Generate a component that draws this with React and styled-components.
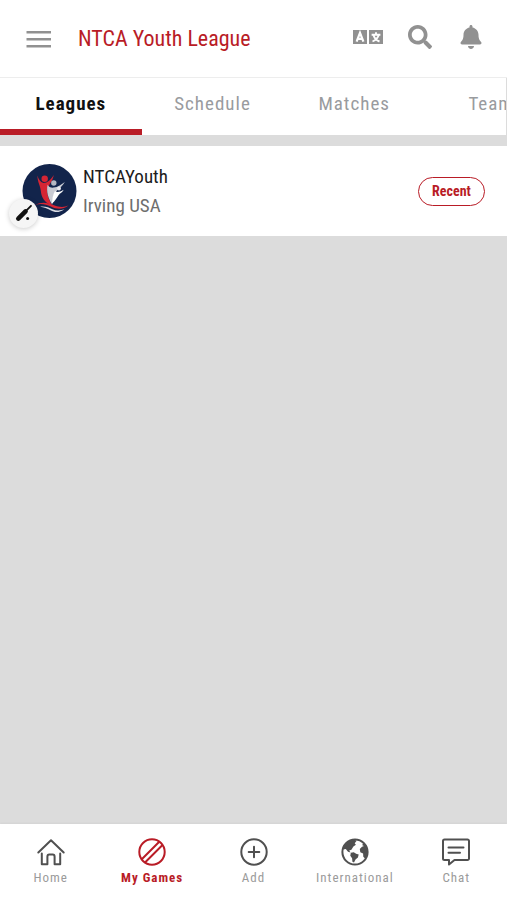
import React, { useState } from "react";
import styled, { createGlobalStyle } from "styled-components";
import { FaSearch, FaBell } from "react-icons/fa";

const red = "#b91c26";
const grey = "#919191";

const GlobalStyle = createGlobalStyle`
  * { box-sizing: border-box; }
  body {
    margin: 0;
    background: #dcdcdc;
    font-family: "Roboto Condensed", Roboto, sans-serif;
  }
  button { font-family: inherit; cursor: pointer; }
`;

const Page = styled.div`
  display: flex;
  flex-direction: column;
  min-height: 100vh;
  overflow-x: hidden;
`;

const Header = styled.header`
  display: flex;
  align-items: center;
  height: 78px;
  padding: 0 22px 0 24px;
  background: #fff;
  border-bottom: 1px solid #ededed;
`;

const IconButton = styled.button`
  display: flex;
  justify-content: center;
  min-width: 28px;
  padding: 0;
  border: 0;
  background: none;
  color: ${grey};
`;

const Title = styled.h1`
  flex: 1;
  margin: 0 0 0 24px;
  font-size: 22px;
  line-height: 28px;
  font-weight: 400;
  color: ${red};
  white-space: nowrap;
`;

const Actions = styled.div`
  display: flex;
  align-items: center;
  gap: 23px;
  padding-bottom: 3px;
`;

const Tabs = styled.nav`
  display: flex;
  height: 57px;
  background: #fff;
  overflow: hidden;
  border-right: 1px solid #dcdcdc;
`;

const Tab = styled.button`
  flex: 0 0 28%;
  padding: 0;
  border: 0;
  border-bottom: 6px solid ${(p) => (p.$active ? red : "transparent")};
  background: none;
  font-size: 19px;
  letter-spacing: 1px;
  font-weight: ${(p) => (p.$active ? 700 : 400)};
  color: ${(p) => (p.$active ? "#111" : "#999b9e")};
`;

const List = styled.main`
  flex: 1;
  padding-top: 11px;
`;

const LeagueRow = styled.article`
  display: flex;
  align-items: center;
  height: 90px;
  padding: 0 22px;
  background: #fff;
`;

const Avatar = styled.div`
  position: relative;
  display: flex;
  margin-right: 6px;
`;

const SportBadge = styled.span`
  position: absolute;
  left: -13px;
  bottom: -9px;
  display: flex;
  align-items: center;
  justify-content: center;
  width: 29px;
  height: 29px;
  border-radius: 50%;
  background: #f5f5f5;
  box-shadow: 0 1px 5px rgba(0, 0, 0, 0.2);
`;

const LeagueText = styled.div`
  flex: 1;
`;

const LeagueName = styled.h2`
  margin: 0;
  font-size: 19px;
  line-height: 29px;
  font-weight: 400;
  color: #1c1c1c;
`;

const LeaguePlace = styled.p`
  margin: 0;
  font-size: 19px;
  line-height: 29px;
  color: #6e6e6e;
`;

const Pill = styled.button`
  width: 67px;
  height: 29px;
  padding: 0;
  border: 1px solid ${red};
  border-radius: 15px;
  background: #fff;
  font-size: 14px;
  font-weight: 700;
  color: ${red};
`;

const BottomNav = styled.nav`
  display: flex;
  height: 76px;
  padding-top: 13px;
  background: #fff;
  box-shadow: 0 -1px 2px rgba(0, 0, 0, 0.04);
`;

const NavItem = styled.button`
  flex: 1 1 0;
  min-width: 0;
  display: flex;
  flex-direction: column;
  align-items: center;
  gap: 1px;
  padding: 0;
  border: 0;
  background: none;
  color: ${(p) => (p.$active ? red : "#505050")};
`;

const NavLabel = styled.span`
  font-size: 13px;
  line-height: 20px;
  letter-spacing: 1px;
  white-space: nowrap;
  font-weight: ${(p) => (p.$active ? 700 : 400)};
  color: ${(p) => (p.$active ? red : "#9b9b9b")};
`;

const MenuIcon = () => (
  <svg width="30" height="20" viewBox="0 0 30 20" stroke="currentColor" strokeWidth="2.6" aria-hidden="true">
    <path d="M2.5 3.2H27M2.5 10.2H27M2.5 17.2H27" />
  </svg>
);

const TranslateIcon = () => (
  <svg width="30" height="16" viewBox="0 0 30 16" aria-hidden="true">
    <path d="M0 1h14v14H0zM16 1h14v14H16z" fill="currentColor" />
    <g fill="none" stroke="#fff" strokeWidth="2.2">
      <path d="M3.6 12.6 7 3.8l3.4 8.8M4.8 9.8h4.4" />
      <path d="M18.6 5.7h8.8M23 3.3v2.4M25.8 5.700q-1.200 4.600-6.300 6.800M20.500 6.200q1.400 4.400 6 6.300" strokeWidth="1.9" />
    </g>
  </svg>
);

const LeagueLogo = () => (
  <svg width="55" height="55" viewBox="0 0 55 55" role="img" aria-label="NTCAYouth logo">
    <circle cx="27.5" cy="27" r="27" fill="#12244b" />
    <path d="M15.500 11.500c1 4 2.700 6.200 6 7.600 4-.5 6.500-2.500 10.300-8.100-1.200 6-4.300 8.800-6 12.800-1.400 4.500.2 10 3.800 17.200-7.500-2.200-10.300-8.200-10.800-14.200-.3-5.200-3.500-8.300-3.300-15.300z" fill="#d52534" />
    <path d="M25.600 20.800c1.200 2.200 3.100 3.100 6.200 2.800 3.800-.4 7-2.500 11-5.500-2 4-5 5.700-8 8.700-3.300 3.400-4.500 8-4.500 13.800-4-5.300-6.200-13.500-4.700-19.800z" fill="#c9cbd3" />
    <path d="M33 27c1.700 1.600 4.600 1.400 8.700-1.200-1.300 2.600-3.600 3.300-5.200 5.400-1.800 2.600-3 5.300-6.700 8.500.2-4.400 1.200-9.300 3.200-12.700z" fill="#fff" />
    <circle cx="22.700" cy="14.800" r="3.200" fill="#d52534" />
    <circle cx="31.800" cy="19" r="2.700" fill="#b5b8c2" />
    <circle cx="37" cy="24.500" r="1.900" fill="#e9eaf0" />
    <path d="M13 41c7-3.700 12.700-2.400 19 .2 5 2 9.800 2.400 14.500.3-6 4.500-12 3.800-17.700 1-5.400-2.500-10.400-3.400-15.800-1.500z" fill="#d52534" />
    <path d="M18 42.800c5-.8 8.800.7 12.500 2.400 3.600 1.600 7.500 1.800 12-.2-5 4-9.600 3.700-14 1.300-3.400-1.900-6.400-3.200-10.500-3.500z" fill="#d8dae1" />
  </svg>
);

const BatIcon = () => (
  <svg width="18" height="18" viewBox="0 0 18 18" aria-hidden="true">
    <path d="m3.300 14.600 7.200-7.200" stroke="#111" strokeWidth="4.600" strokeLinecap="round" />
    <path d="m10 7.800 6-6" stroke="#111" strokeWidth="1.800" strokeLinecap="round" />
    <circle cx="12.600" cy="14.600" r="1.500" fill="#111" />
  </svg>
);

const NavSvg = ({ children }) => (
  <svg width="30" height="30" viewBox="0 0 30 30" fill="none" stroke="currentColor" strokeWidth="2" strokeLinecap="round" strokeLinejoin="round" aria-hidden="true">
    {children}
  </svg>
);

const HomeIcon = () => (
  <NavSvg>
    <path d="M2.300 15.500 15 3.300l12.700 12.200M5.800 16.500v10.700h5.600v-7.400c0-1.400.9-2.200 1.900-2.200h3.400c1 0 1.900.8 1.900 2.200v7.400h5.600V16.500" />
  </NavSvg>
);

const BallIcon = () => (
  <NavSvg>
    <circle cx="15" cy="15" r="12.700" />
    <path d="M5 22 22 5M8.500 25 25 8.500" />
  </NavSvg>
);

const AddIcon = () => (
  <NavSvg>
    <circle cx="15" cy="15" r="12.700" />
    <path d="M15 9.700v10.600M9.700 15h10.600" />
  </NavSvg>
);

const GlobeIcon = () => (
  <NavSvg>
    <circle cx="15" cy="15" r="12.600" />
    <g fill="currentColor" stroke="none">
      <path d="M3 12.500C4 7 8.500 3 14.500 2.500L16.500 4l-1.800 2.300 1.200 1.500-2.500 1.700-2 3.200-2.200.8 1.300 2-2.500-.8-2.200-2.700z" />
      <path d="m10.800 15.800 3-.5 2.300 1.500 2.600.8-.8 2.900-2.400 2-1.500 3-1.600-.7-.3-3.500-1.800-2.500z" />
      <path d="m23 6 2.500 2L27.500 12l.2 4-2.200 6-2.200-2.200-.2-3.300-2.800-1.200-.5-3.300 2.200-2.300 2-.7-1.700-.8z" />
    </g>
  </NavSvg>
);

const ChatIcon = () => (
  <NavSvg>
    <path d="M3.500 2.500h23a1.500 1.500 0 0 1 1.500 1.500v17.500a1.500 1.500 0 0 1-1.500 1.500H13.500L8 27.500V23H3.500A1.500 1.500 0 0 1 2 21.500V4a1.500 1.500 0 0 1 1.500-1.500zM7.500 10.500h15M7.500 15.700h11.500" />
  </NavSvg>
);

const tabs = ["Leagues", "Schedule", "Matches", "Teams"];

const navItems = [
  { label: "Home", Icon: HomeIcon },
  { label: "My Games", Icon: BallIcon },
  { label: "Add", Icon: AddIcon },
  { label: "International", Icon: GlobeIcon },
  { label: "Chat", Icon: ChatIcon },
];

export default function App() {
  const [tab, setTab] = useState("Leagues");
  const [section, setSection] = useState("My Games");

  return (
    <Page>
      <GlobalStyle />
      <Header>
        <IconButton aria-label="Menu"><MenuIcon /></IconButton>
        <Title>NTCA Youth League</Title>
        <Actions>
          <IconButton aria-label="Translate"><TranslateIcon /></IconButton>
          <IconButton aria-label="Search"><FaSearch size={24} /></IconButton>
          <IconButton aria-label="Notifications"><FaBell size={24} /></IconButton>
        </Actions>
      </Header>
      <Tabs>
        {tabs.map((name) => (
          <Tab key={name} $active={name === tab} onClick={() => setTab(name)}>
            {name}
          </Tab>
        ))}
      </Tabs>
      <List>
        <LeagueRow>
          <Avatar>
            <LeagueLogo />
            <SportBadge><BatIcon /></SportBadge>
          </Avatar>
          <LeagueText>
            <LeagueName>NTCAYouth</LeagueName>
            <LeaguePlace>Irving USA</LeaguePlace>
          </LeagueText>
          <Pill>Recent</Pill>
        </LeagueRow>
      </List>
      <BottomNav>
        {navItems.map(({ label, Icon }) => (
          <NavItem key={label} $active={label === section} onClick={() => setSection(label)}>
            <Icon />
            <NavLabel $active={label === section}>{label}</NavLabel>
          </NavItem>
        ))}
      </BottomNav>
    </Page>
  );
}
